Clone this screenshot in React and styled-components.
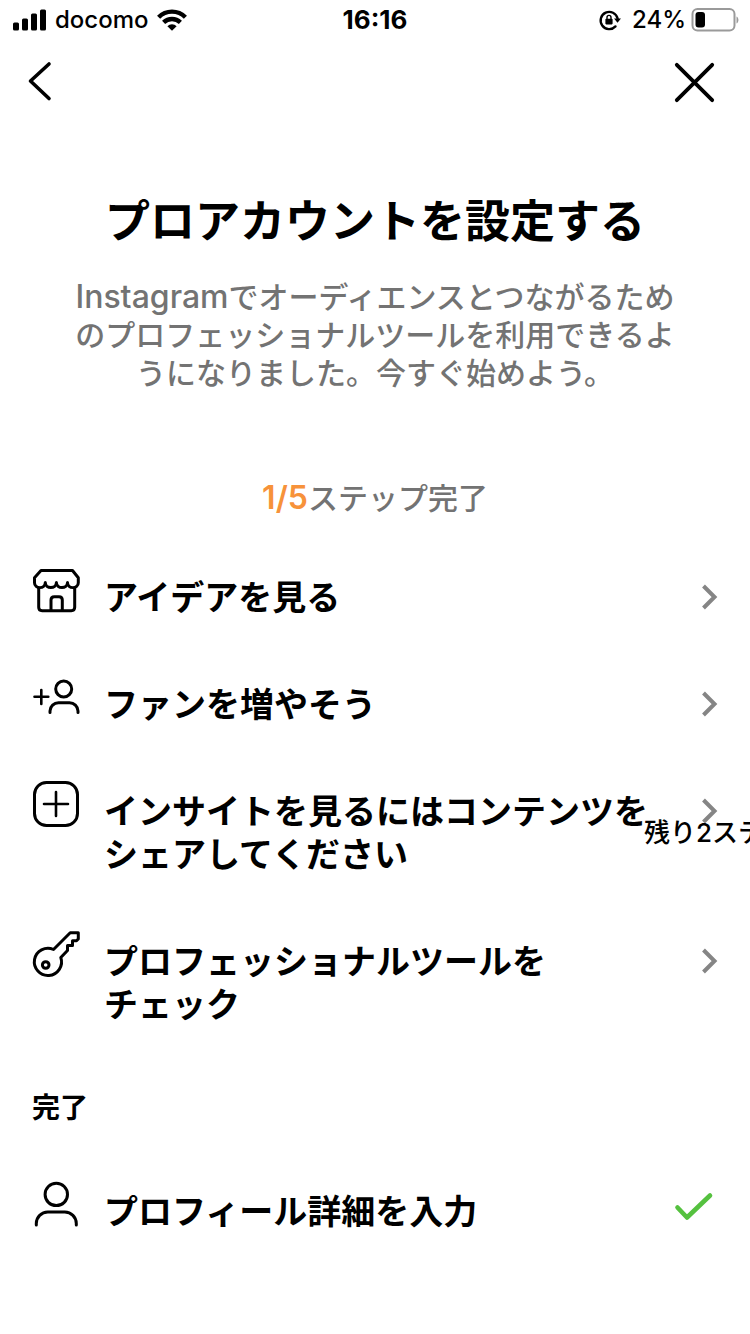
import React from "react";
import styled, { createGlobalStyle } from "styled-components";

const GlobalStyle = createGlobalStyle`
  *, *::before, *::after { box-sizing: border-box; }
  body {
    margin: 0;
    background: #fff;
    color: #000;
    font-family: Inter, "Noto Sans CJK JP", sans-serif;
  }
`;

const Screen = styled.div`
  min-height: 100vh;
  overflow-x: hidden;
  background: #fff;
`;

const StatusBar = styled.div`
  display: grid;
  grid-template-columns: 1fr auto 1fr;
  align-items: center;
  height: 40px;
  padding: 0 12px;
  font-size: 24px;
  line-height: 40px;
  font-weight: 500;
`;

const StatusGroup = styled.div`
  display: flex;
  align-items: center;
  justify-content: ${(p) => (p.$end ? "flex-end" : "flex-start")};
  gap: ${(p) => (p.$end ? "5px" : "8px")};
`;

const Percent = styled.span`
  margin-left: 6px;
`;

const Clock = styled.time`
  font-size: 26px;
  font-weight: 700;
`;

const NavBar = styled.nav`
  display: flex;
  align-items: center;
  justify-content: space-between;
  height: 84px;
  padding: 0 32px 0 16px;
`;

const IconButton = styled.button`
  display: block;
  width: 48px;
  height: 48px;
  padding: 0;
  border: 0;
  background: none;
  color: inherit;
`;

const Intro = styled.header`
  padding: 68px 64px 26px;
  text-align: center;
`;

const Title = styled.h1`
  margin: 0 0 26px;
  font-size: 45px;
  line-height: 60px;
  font-weight: 700;
`;

const Description = styled.p`
  margin: 0;
  color: #737373;
  font-size: 30px;
  line-height: 38px;
  font-weight: 500;
  white-space: pre-line;
`;

const Progress = styled.p`
  margin: 86px 0 0;
  color: #737373;
  font-size: 30px;
  line-height: 40px;
  font-weight: 500;
`;

const Latin = styled.span`
  font-size: 32px;
  line-height: 32px;
`;

const ProgressCount = styled(Latin)`
  color: #f7923a;
  font-weight: 600;
`;

const StepList = styled.ul`
  margin: 0;
  padding: 0;
  list-style: none;
`;

const StepButton = styled.button`
  display: flex;
  align-items: flex-start;
  gap: 24px;
  width: 100%;
  padding: 23px 32px 32px;
  border: 0;
  background: none;
  color: inherit;
  font: inherit;
  text-align: left;
`;

const StepIcon = styled.span`
  flex: none;
  width: 48px;
  height: 48px;
`;

const StepLabel = styled.span`
  flex: 1;
  padding-top: 9px;
  font-size: 34px;
  line-height: 43px;
  font-weight: 700;
  white-space: pre-line;
`;

const Trailing = styled.span`
  position: relative;
  display: flex;
  align-items: center;
  flex: none;
  height: 43px;
  margin-top: ${(p) => (p.$done ? "4px" : "8px")};
  margin-right: ${(p) => (p.$done ? "4px" : "0")};
`;

const Remaining = styled.span`
  position: absolute;
  top: 24px;
  left: -57px;
  font-size: 26px;
  line-height: 40px;
  font-weight: 500;
  white-space: nowrap;
`;

const SectionTitle = styled.h2`
  margin: 0;
  padding: 30px 32px;
  font-size: 28px;
  line-height: 40px;
  font-weight: 700;
`;

const Svg = styled.svg`
  display: block;
  flex: none;
  overflow: visible;
`;

function Glyph({ width = 48, height = 48, stroke = 3, color = "currentColor", children, ...rest }) {
  return (
    <Svg
      width={width}
      height={height}
      viewBox={`0 0 ${width} ${height}`}
      fill="none"
      stroke={color}
      strokeWidth={stroke}
      strokeLinecap="round"
      strokeLinejoin="round"
      aria-hidden="true"
      {...rest}
    >
      {children}
    </Svg>
  );
}

const SignalIcon = () => (
  <Glyph width={35} height={22} stroke={0}>
    <g fill="#000">
      <rect x="1" y="13.5" width="6" height="8" rx="1.5" />
      <rect x="10" y="9.5" width="6" height="12" rx="1.5" />
      <rect x="19" y="4.5" width="6" height="17" rx="1.5" />
      <rect x="28" y="0.5" width="6" height="21" rx="1.5" />
    </g>
  </Glyph>
);

const WifiIcon = () => (
  <Glyph width={30} height={22} stroke={4.4} strokeLinecap="butt">
    <path d="M1.6 8.2a19 19 0 0 1 26.8 0" />
    <path d="M6.6 13.4a12 12 0 0 1 16.8 0" />
    <path d="M15 21.8l-4.6-4.6a6.5 6.5 0 0 1 9.2 0z" fill="#000" stroke="none" />
  </Glyph>
);

const RotationLockIcon = () => (
  <Glyph width={22} height={22} stroke={2.4}>
    <path d="M16.5 17.4A8.6 8.6 0 1 1 18.6 9.5" />
    <path d="M15 9.4h7l-3.5 4.4z" fill="#000" stroke="none" />
    <rect x="6.4" y="9.8" width="7.2" height="5.6" rx="0.8" fill="#000" stroke="none" />
    <path d="M8 10V8.4a2 2 0 0 1 4 0V10" strokeWidth="1.4" />
  </Glyph>
);

const BatteryIcon = () => (
  <Glyph width={47} height={24} stroke={2}>
    <rect x="1.5" y="1" width="42" height="21.5" rx="5" stroke="#9a9a9a" />
    <rect x="4.5" y="4" width="9.5" height="15.5" rx="3" fill="#000" stroke="none" />
    <path d="M45.500 8.500c2.600 1.200 2.600 5.800 0 7z" fill="#9a9a9a" stroke="none" />
  </Glyph>
);

const BackIcon = () => (
  <Glyph stroke={3.6}>
    <path d="M33 6L14.500 23L33 40.500" />
  </Glyph>
);

const CloseIcon = () => (
  <Glyph stroke={3.8}>
    <path d="M6.800 6.800L42.200 42.200M42.200 6.800L6.800 42.200" />
  </Glyph>
);

const StoreIcon = () => (
  <Glyph>
    <path d="M9 3.500H40.500L46.300 10.700V15.700C46.300 22.300 35.500 22.300 35.500 15.500C35.500 22.300 24.400 22.300 24.400 15.500C24.400 22.300 13.300 22.300 13.300 15.500C13.300 22.300 2.500 22.300 2.500 15.700V10.700Z" />
    <path d="M6.700 21V40.300Q6.700 43.700 10.100 43.700H39.300Q42.700 43.700 42.700 40.300V21" />
    <path d="M19 43V33Q19 29.700 22.300 29.700H27Q30.300 29.700 30.300 33V43" />
  </Glyph>
);

const AddFanIcon = () => (
  <Glyph>
    <circle cx="31.700" cy="15" r="8" />
    <path d="M18 38.500V37A8.500 8.500 0 0 1 26.500 28.800H37.500A8.500 8.500 0 0 1 46 37V38.500" />
    <path d="M2.500 22.700H16.300M9.300 16V30" strokeWidth="2.600" />
  </Glyph>
);

const AddPostIcon = () => (
  <Glyph>
    <rect x="2.500" y="1.500" width="43" height="43" rx="12" />
    <path d="M12 23H36M24 11V35" strokeWidth="2.600" />
  </Glyph>
);

const KeyIcon = () => (
  <Glyph>
    <path d="M21.500 18.500L38.200 1.700H46.300V8L44.500 9.800H40.500V14.500H35.500V19.500L28.800 26.500A13.600 13.600 0 1 1 21.500 18.500Z" />
    <circle cx="13.700" cy="34" r="3.300" />
  </Glyph>
);

const ProfileIcon = () => (
  <Glyph>
    <circle cx="24.300" cy="13.400" r="11.200" />
    <path d="M4.300 44V42.500A11.500 11.500 0 0 1 15.800 31H32.800A11.500 11.500 0 0 1 44.300 42.500V44" />
  </Glyph>
);

const ChevronIcon = () => (
  <Glyph width={17} height={26} stroke={4} color="#858585" strokeLinecap="butt" strokeLinejoin="miter">
    <path d="M2.500 2L13.500 13L2.500 24" />
  </Glyph>
);

const CheckIcon = () => (
  <Glyph width={40} height={28} stroke={4.6} color="#55c13f">
    <path d="M3.500 14.500L13 24.500L36 2.500" />
  </Glyph>
);

const STEPS = [
  { icon: StoreIcon, label: "アイデアを見る" },
  { icon: AddFanIcon, label: "ファンを増やそう" },
  {
    icon: AddPostIcon,
    label: "インサイトを見るにはコンテンツを\nシェアしてください",
    remaining: "残り2ステップ",
  },
  { icon: KeyIcon, label: "プロフェッショナルツールを\nチェック" },
];

const DONE = [{ icon: ProfileIcon, label: "プロフィール詳細を入力" }];

function Step({ icon: Icon, label, remaining, done }) {
  return (
    <li>
      <StepButton type="button">
        <StepIcon>
          <Icon />
        </StepIcon>
        <StepLabel>{label}</StepLabel>
        <Trailing $done={done}>
          {done ? <CheckIcon /> : <ChevronIcon />}
          {remaining && <Remaining>{remaining}</Remaining>}
        </Trailing>
      </StepButton>
    </li>
  );
}

export default function App() {
  return (
    <>
      <GlobalStyle />
      <Screen lang="ja">
        <StatusBar>
          <StatusGroup>
            <SignalIcon />
            <span>docomo</span>
            <WifiIcon />
          </StatusGroup>
          <Clock>16:16</Clock>
          <StatusGroup $end>
            <RotationLockIcon />
            <Percent>24%</Percent>
            <BatteryIcon />
          </StatusGroup>
        </StatusBar>
        <NavBar>
          <IconButton type="button" aria-label="戻る">
            <BackIcon />
          </IconButton>
          <IconButton type="button" aria-label="閉じる">
            <CloseIcon />
          </IconButton>
        </NavBar>
        <main>
          <Intro>
            <Title>プロアカウントを設定する</Title>
            <Description>
              <Latin>Instagram</Latin>
              {"でオーディエンスとつながるため\nのプロフェッショナルツールを利用できるよ\nうになりました。今すぐ始めよう。"}
            </Description>
            <Progress>
              <ProgressCount>1/5</ProgressCount>ステップ完了
            </Progress>
          </Intro>
          <StepList>
            {STEPS.map((step) => (
              <Step key={step.label} {...step} />
            ))}
          </StepList>
          <SectionTitle>完了</SectionTitle>
          <StepList>
            {DONE.map((step) => (
              <Step key={step.label} {...step} done />
            ))}
          </StepList>
        </main>
      </Screen>
    </>
  );
}
